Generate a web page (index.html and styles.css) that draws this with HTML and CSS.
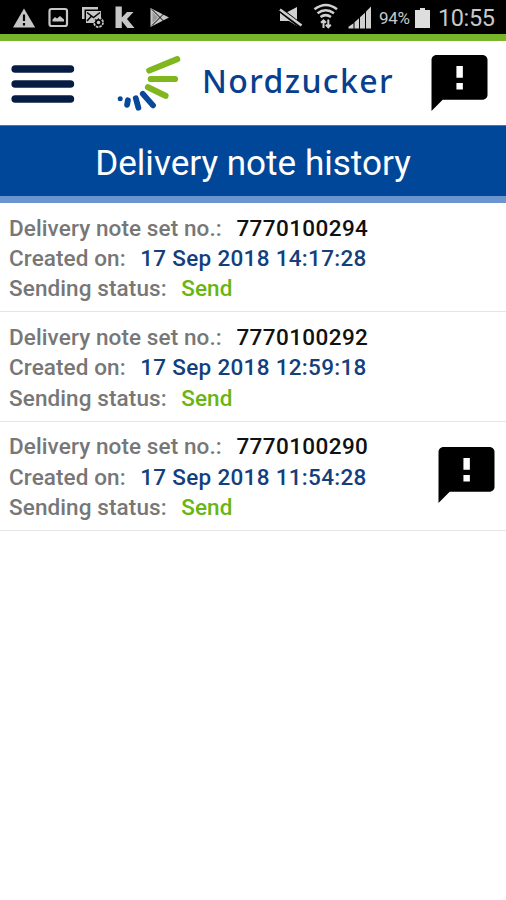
FILE: index.html
```html
<!DOCTYPE html>
<html lang="en">
<head>
<meta charset="utf-8">
<title>Delivery note history</title>
<link rel="stylesheet" href="styles.css">
</head>
<body>
<svg class="defs" width="0" height="0"><symbol id="alert" viewBox="2 2 20 20"><path d="M20 2H4c-1.100 0-1.990.7-1.990 1.700L2 22l4-4h14c1.100 0 2-.7 2-1.700V3.700C22 2.700 21.100 2 20 2zm-6.800 12.300h-2.300v-2.300h2.300v2.300zm0-4.200h-2.300V5.900h2.300v4.200z"/></symbol></svg>
<div class="status">
  <svg class="status-icons" width="180" height="34" viewBox="0 0 180 34" fill="#c6c6c6">
    <path d="M24 8.500 35.200 27.500H13z"/><path d="M24 14.500v6.500M24 23v2.500" stroke="#000" stroke-width="2.200"/>
    <rect x="49.500" y="9" width="17.500" height="17" rx="2" fill="none" stroke="#c6c6c6" stroke-width="2.200"/><path d="M52.500 21.500v-2l2.500-2.500 2 1.500 3-2.500 4 3.500v2z"/>
    <path d="M82 19V7h16v2.500H84.500V19z"/><path d="M86 11h15v7l-5 5H86z"/><path d="m87 12.500 6.500 5 6.500-5M87 21l4.500-5" fill="none" stroke="#000" stroke-width="1.500"/>
    <circle cx="98.500" cy="22.500" r="4.500" fill="#000" stroke="#c6c6c6" stroke-width="1.800" stroke-dasharray="2.500 1"/><circle cx="98.500" cy="22.500" r="1.800"/>
    <path d="M115.500 6.500h6.300v11l5.200-5.500h6.500l-6.500 7 7.500 9h-7.200l-5.500-7v7h-6.300z"/>
    <path d="M150.500 8v19L169 17.500z"/><path d="M152 9.500 164.500 22M152 25.500 164.500 13" stroke="#000" stroke-width="1"/><path d="M152.500 12v11l5.500-5.500z" fill="#999"/>
  </svg>
  <svg class="status-icons" width="100" height="34" viewBox="276 0 100 34" fill="#d0d0d0">
    <path d="M280 13h5.500L297 7v19l-8-5h-9z"/><path d="m279 9 22 17" stroke="#000" stroke-width="5"/><path d="m280 9.500 21.500 16" stroke="#d0d0d0" stroke-width="2.600"/>
    <g fill="none" stroke="#d0d0d0" stroke-width="2.500"><path d="M314.500 9.200q11.500-8.500 22.500 0M317.500 13.200q8.200-6 16.500 0M320.500 17q5.200-3.800 10.500 0"/><path d="M323.500 28v-7.500M328.300 19.500V27M321 22.800l2.500-2.500 2.500 2.500M325.800 24.800l2.500 2.500 2.500-2.500" stroke-width="2"/></g>
    <path d="M348.500 28.500v-1.800l5-3.500v5.300zM354.500 28.500v-6.200l4.500-4v10.200zM360 28.500V17.200l5-4.500v15.800z"/><path d="M366 28.500V11.500l5-5v22z"/>
  </svg>
  <span class="percent">94%</span>
  <svg class="battery" width="15" height="20" viewBox="0 0 15 20" fill="#dedede"><path d="M5 0h5v2h5v18H0V2h5z"/></svg>
  <span class="clock">10:55</span>
</div>
<header class="header">
  <svg class="menu" width="64" height="40" viewBox="0 0 64 40" stroke="#071c43" stroke-width="7.600" stroke-linecap="round"><path d="M4.200 5h55.200M4.200 20h55.200M4.200 35h55.200"/></svg>
  <svg class="logo" width="66" height="58" viewBox="116 54 66 58" fill="none" stroke-width="6.200" stroke-linecap="round">
    <path stroke="#80b61e" d="m149.300 70.500 27.900-11.300M150.800 79h24.200M148 87.200l17.500 8.600"/>
    <path stroke="#07489a" stroke-width="5.800" d="m142.800 93.800 10.200 11.600M135.800 98.200l2.600 9.600M127.900 100.300l-.8 4.500"/><circle cx="120.200" cy="98.800" r="2.500" fill="#07489a"/>
  </svg>
  <span class="brand">Nordzucker</span>
  <svg class="alert header-alert"><use href="#alert"/></svg>
</header>
<h1 class="title"><span>Delivery note history</span></h1>
<main class="list">
  <section class="note"><div>
    <p>Delivery note set no.:<b class="number">7770100294</b></p>
    <p>Created on:<b class="date">17 Sep 2018 14:17:28</b></p>
    <p>Sending status:<b class="sent">Send</b></p></div>
  </section>
  <section class="note"><div>
    <p>Delivery note set no.:<b class="number">7770100292</b></p>
    <p>Created on:<b class="date">17 Sep 2018 12:59:18</b></p>
    <p>Sending status:<b class="sent">Send</b></p></div>
  </section>
  <section class="note"><div>
    <p>Delivery note set no.:<b class="number">7770100290</b></p>
    <p>Created on:<b class="date">17 Sep 2018 11:54:28</b></p>
    <p>Sending status:<b class="sent">Send</b></p></div>
    <svg class="alert"><use href="#alert"/></svg>
  </section>
</main>
</body>
</html>
```
FILE: styles.css
```css
* { box-sizing: border-box; }
body { margin: 0; background: #fff; font-family: Roboto, sans-serif; height: 900px; overflow: hidden; }
svg { display: block; flex: none; }
.defs { position: absolute; }
.status { display: flex; align-items: center; height: 41px; background: #000; border-bottom: 7px solid #78b52b; color: #c8c8c8; white-space: nowrap; }
.status-icons + .status-icons { margin-left: 96px; }
.percent { width: 36px; margin-left: 3px; font-size: 17px; letter-spacing: -.3px; padding-top: 2px; }
.battery { margin-top: 2px; }
.clock { margin-left: 8px; font-size: 23.500px; letter-spacing: -.4px; padding-top: 2px; }
.header { display: flex; align-items: flex-start; height: 84px; }
.menu { margin: 23px 0 0 11px; }
.logo { margin: 13px 0 0 40.500px; }
.brand { width: 230px; margin: 18px 0 0 20.500px; font: 500 32px/44px "Noto Sans", sans-serif; letter-spacing: 1.400px; color: #07408e; }
.alert { width: 57px; height: 56px; fill: #000; }
.header-alert { margin: 14px 0 0 -1.500px; }
.title { display: flex; justify-content: center; height: 78px; margin: 0; padding-top: 16px; background: #004799; border-top: 1px solid #4774ad; border-bottom: 7px solid #6c95d0; color: #fff; font-size: 35.100px; font-weight: 400; line-height: 42px; }
.note { display: flex; justify-content: space-between; height: 109.300px; padding: 9.500px 11.500px 0 9px; border-bottom: 1px solid #e6e6e6; }
.note p { margin: 0; font-size: 22.500px; line-height: 30.400px; font-weight: 500; letter-spacing: .1px; color: #777; white-space: nowrap; }
.note b { font-weight: 500; margin-left: 14.500px; }
.note .number { letter-spacing: .4px; color: #111; }
.note .date { letter-spacing: .3px; color: #133f7d; }
.note .sent { color: #69b512; }
.note .alert { margin-top: 15.500px; }
```
